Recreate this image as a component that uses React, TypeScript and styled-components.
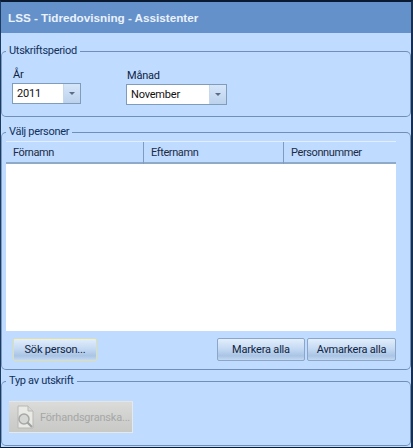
import * as React from "react";
import styled, { createGlobalStyle } from "styled-components";

const Global = createGlobalStyle`
  html, body {
    margin: 0;
    padding: 0;
    background: #bfdbff;
  }
`;

const Window = styled.div`
  width: 413px;
  height: 448px;
  box-sizing: border-box;
  display: flex;
  flex-direction: column;
  background: #bfdbff;
  border-top: 2px solid #0a1a30;
  border-left: 1px solid #1d3a60;
  border-right: 2px solid #17304f;
  border-bottom: 1px solid #0a1a30;
  font-family: Roboto, "Liberation Sans", Arial, sans-serif;
  font-size: 11px;
  letter-spacing: -0.2px;
  color: #10233f;
  overflow: hidden;
`;

const TitleBar = styled.div`
  height: 31px;
  flex-shrink: 0;
  display: flex;
  align-items: center;
  padding-left: 7px;
  background: #6591ca;
  color: #eaf2fc;
  font-family: "Liberation Sans", Arial, sans-serif;
  font-weight: bold;
  font-size: 11.7px;
  letter-spacing: 0;
`;

const Content = styled.div`
  flex-grow: 1;
  display: flex;
  flex-direction: column;
  padding-top: 11px;
`;

const Group = styled.fieldset<{ $height: number; $gap: number }>`
  height: ${(p) => p.$height}px;
  box-sizing: border-box;
  flex-shrink: 0;
  margin: 0 0 ${(p) => p.$gap}px 0;
  padding: 0;
  border: 1px solid #6f8fb8;
  border-left-color: #7d9cc2;
  border-radius: 5px;
  min-width: 0;
`;

const Legend = styled.legend`
  margin-left: 4px;
  padding: 0 3px;
  letter-spacing: -0.3px;
  line-height: 14px;
  color: #12305a;
`;

const PeriodRow = styled.div`
  display: flex;
  gap: 45px;
  padding: 6px 0 0 10px;
`;

const Field = styled.div<{ $offset: number }>`
  display: flex;
  flex-direction: column;
  margin-top: ${(p) => p.$offset}px;
`;

const FieldLabel = styled.label`
  height: 19px;
  box-sizing: border-box;
  padding: 3px 0 0 1px;
  line-height: 16px;
  color: #10233f;
`;

const Combo = styled.div<{ $width: number }>`
  width: ${(p) => p.$width}px;
  height: 21px;
  box-sizing: border-box;
  display: flex;
  background: #fff;
  border: 1px solid #7f9db9;
`;

const ComboText = styled.div`
  flex-grow: 1;
  padding-left: 4px;
  line-height: 19px;
  color: #111;
`;

const ComboArrow = styled.div`
  width: 16px;
  display: flex;
  align-items: center;
  justify-content: center;
  background: linear-gradient(#d6e6fa, #bcd2ec);
  border-left: 1px solid #c8d8ec;

  &::after {
    content: "";
    border-left: 3px solid transparent;
    border-right: 3px solid transparent;
    border-top: 3px solid #5b6d85;
  }
`;

const GroupBody = styled.div`
  display: flex;
  flex-direction: column;
  padding: 2px 14px 0 4px;
`;

const Grid = styled.div`
  display: flex;
  flex-direction: column;
  height: 190px;
`;

const GridHeader = styled.div`
  height: 23px;
  flex-shrink: 0;
  display: grid;
  grid-template-columns: 138px 140px 1fr;
  box-sizing: border-box;
  border-top: 1px solid #e3eefc;
  border-bottom: 2px solid #8fa9c9;
  background: #bfdbff;
`;

const HeaderCell = styled.div`
  padding-left: 7px;
  letter-spacing: -0.4px;
  line-height: 22px;
  color: #1c2c44;
  border-right: 1px solid #7f9cc0;

  &:last-child {
    border-right: 0;
  }
`;

const GridBody = styled.div`
  flex-grow: 1;
  background: #fff;
`;

const ButtonRow = styled.div`
  display: flex;
  align-items: center;
  gap: 2px;
  padding: 7px 0 0 7px;
`;

const Button = styled.button<{ $width: number; $focused?: boolean }>`
  width: ${(p) => p.$width}px;
  height: 23px;
  padding: 0;
  font-family: inherit;
  font-size: 11px;
  letter-spacing: -0.2px;
  color: #10233f;
  border: 1px solid ${(p) => (p.$focused ? "#e2dfa6" : "#8ba6c6")};
  border-radius: 2px;
  background: linear-gradient(#e2eefc, #c2d8f2 50%, #a9c4e4 80%, #c4d9f2);
`;

const Spacer = styled.div`
  flex-grow: 1;
`;

const PreviewButton = styled.button`
  width: 124px;
  height: 32px;
  margin: 13px 0 0 7px;
  padding: 0 0 0 3px;
  display: flex;
  align-items: center;
  gap: 2px;
  font-family: inherit;
  font-size: 11px;
  letter-spacing: -0.2px;
  color: #a5a7a6;
  white-space: nowrap;
  overflow: hidden;
  border: 0;
  border-top: 1px solid #e4e6e6;
  border-bottom: 1px solid #e6e9ea;
  border-right: 1px solid #e6e9ea;
  background: linear-gradient(#dbdcda, #cfd0cd 60%, #c9cac6);
`;

const PreviewIcon = () => (
  <svg width="26" height="26" viewBox="0 0 26 26" style={{ flexShrink: 0 }}>
    <path d="M6 2h10l5 5v17H6z" fill="#e9e9e6" stroke="#b7b8b5" />
    <path d="M16 2v5h5" fill="#d8d8d5" stroke="#b7b8b5" />
    <circle cx="12" cy="15" r="5" fill="#d5d7d5" stroke="#a6a8a6" strokeWidth="1.5" />
    <path d="M15.5 18.5L20 23" stroke="#a0a2a0" strokeWidth="2.2" />
  </svg>
);

export default function App() {
  return (
    <Window>
      <Global />
      <TitleBar>LSS - Tidredovisning - Assistenter</TitleBar>
      <Content>
        <Group $height={73} $gap={8}>
          <Legend>Utskriftsperiod</Legend>
          <PeriodRow>
            <Field $offset={0}>
              <FieldLabel>År</FieldLabel>
              <Combo $width={69}>
                <ComboText>2011</ComboText>
                <ComboArrow />
              </Combo>
            </Field>
            <Field $offset={1}>
              <FieldLabel>Månad</FieldLabel>
              <Combo $width={101}>
                <ComboText>November</ComboText>
                <ComboArrow />
              </Combo>
            </Field>
          </PeriodRow>
        </Group>
        <Group $height={245} $gap={4}>
          <Legend>Välj personer</Legend>
          <GroupBody>
            <Grid>
              <GridHeader>
                <HeaderCell>Förnamn</HeaderCell>
                <HeaderCell>Efternamn</HeaderCell>
                <HeaderCell>Personnummer</HeaderCell>
              </GridHeader>
              <GridBody />
            </Grid>
            <ButtonRow>
              <Button $width={84} $focused>Sök person...</Button>
              <Spacer />
              <Button $width={88}>Markera alla</Button>
              <Button $width={89}>Avmarkera alla</Button>
            </ButtonRow>
          </GroupBody>
        </Group>
        <Group $height={72} $gap={0}>
          <Legend>Typ av utskrift</Legend>
          <PreviewButton disabled>
            <PreviewIcon />
            Förhandsgranska...
          </PreviewButton>
        </Group>
      </Content>
    </Window>
  );
}
